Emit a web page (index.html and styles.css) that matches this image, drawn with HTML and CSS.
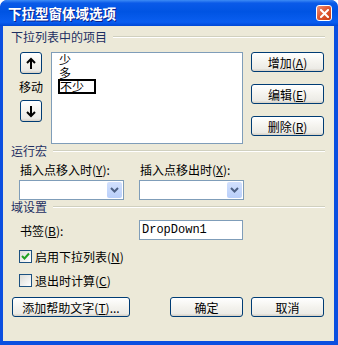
FILE: index.html
```html
<!DOCTYPE html>
<html lang="zh-CN">
<head>
<meta charset="UTF-8" />
<title>下拉型窗体域选项</title>
<link rel="stylesheet" href="styles.css">
</head>
<body>

<div class="window">
  <div class="titlebar">
    <span class="title">下拉型窗体域选项</span>
    <button type="button" class="close" aria-label="关闭">
      <svg width="9" height="9" viewBox="0 0 9 9"><path d="M1 1 L8 8 M8 1 L1 8" stroke="#fff" stroke-width="2" stroke-linecap="square"/></svg>
    </button>
  </div>

  <div class="dialog">
    <!-- Items in list -->
    <div class="group-title"><span>下拉列表中的项目</span></div>
    <div class="items">
      <div class="move">
        <button type="button" class="btn arrow" aria-label="上移">
          <svg width="10" height="13" viewBox="0 0 10 13"><path d="M5 12 V2 M1 6 L5 2 L9 6" fill="none" stroke="#000" stroke-width="2"/></svg>
        </button>
        <span class="move-label">移动</span>
        <button type="button" class="btn arrow" aria-label="下移">
          <svg width="10" height="13" viewBox="0 0 10 13"><path d="M5 1 V11 M1 7 L5 11 L9 7" fill="none" stroke="#000" stroke-width="2"/></svg>
        </button>
      </div>
      <div class="listbox">
        <div class="item">少</div>
        <div class="item">多</div>
        <div class="item focus">不少</div>
      </div>
      <div class="side-buttons">
        <button type="button" class="btn">增加(<u>A</u>)</button>
        <button type="button" class="btn">编辑(<u>E</u>)</button>
        <button type="button" class="btn">删除(<u>R</u>)</button>
      </div>
    </div>

    <!-- Macros -->
    <div class="group-title"><span>运行宏</span></div>
    <div class="macro">
      <div class="field">
        <label>插入点移入时(<u>Y</u>):</label>
        <div class="combo"><span class="drop"><svg width="9" height="6" viewBox="0 0 9 6"><path d="M1 1 L4.5 4.5 L8 1" fill="none" stroke="#4d6185" stroke-width="2"/></svg></span></div>
      </div>
      <div class="field">
        <label>插入点移出时(<u>X</u>):</label>
        <div class="combo"><span class="drop"><svg width="9" height="6" viewBox="0 0 9 6"><path d="M1 1 L4.5 4.5 L8 1" fill="none" stroke="#4d6185" stroke-width="2"/></svg></span></div>
      </div>
    </div>

    <!-- Field settings -->
    <div class="group-title"><span>域设置</span></div>
    <div class="bookmark">
      <label>书签(<u>B</u>):</label>
      <div class="textbox">DropDown1</div>
    </div>
    <label class="check"><span class="box checked"><svg width="9" height="9" viewBox="0 0 9 9"><path d="M1 4 L3.5 6.5 L8 1.5" fill="none" stroke="#21a121" stroke-width="2"/></svg></span>启用下拉列表(<u>N</u>)</label>
    <label class="check"><span class="box"></span>退出时计算(<u>C</u>)</label>

    <div class="footer">
      <button type="button" class="btn help">添加帮助文字(<u>T</u>)...</button>
      <button type="button" class="btn">确定</button>
      <button type="button" class="btn">取消</button>
    </div>
  </div>
</div>

</body>
</html>
```

FILE: styles.css
```css
body {
  margin: 0;
  background: #fff;
  font-family: "Noto Sans CJK SC", "Liberation Sans", sans-serif;
  font-size: 12px;
  color: #000;
}
.window {
  width: 338px;
  height: 345px;
  box-sizing: border-box;
  background: #0b4fe0;
  border-radius: 7px 7px 0 0;
  padding: 0 4px 4px 3px;
  display: flex;
  flex-direction: column;
  overflow: hidden;
}
.titlebar {
  height: 26px;
  margin: 0 -4px 0 -3px;
  padding: 0 6px 0 8px;
  display: flex;
  align-items: center;
  justify-content: space-between;
  background: linear-gradient(180deg, #3d8bf5 0, #0a5ae8 12%, #0054e3 45%, #0a5ef0 85%, #0048d6 100%);
  border-radius: 7px 7px 0 0;
}
.title {
  color: #fff;
  font-weight: 700;
  font-size: 13.5px;
  line-height: 16px;
  text-shadow: 1px 1px #0a1e8a;
}
.close {
  width: 16px;
  height: 16px;
  padding: 0;
  border: 1px solid #fff;
  border-radius: 3px;
  background: linear-gradient(135deg, #f0907a 0, #e05a34 45%, #c93c12 100%);
  display: flex;
  align-items: center;
  justify-content: center;
}
.dialog {
  flex: 1;
  background: #ece9d8;
  padding: 4px 9px 0 8px;
}
.group-title {
  display: flex;
  align-items: center;
  height: 14px;
  line-height: 14px;
  color: #1d2f62;
}
.group-title::after {
  content: "";
  flex: 1;
  margin-left: 6px;
  border-top: 1px solid #d0d0bf;
  border-bottom: 1px solid #fff;
}
.btn {
  box-sizing: border-box;
  height: 20px;
  padding: 0;
  border: 1px solid #003c74;
  border-radius: 3px;
  background: linear-gradient(180deg, #fff 0, #f4f3ee 50%, #ecebe6 86%, #d6d0c5 100%);
  font-family: inherit;
  font-size: 12px;
  line-height: 17px;
  color: #000;
}
.items {
  display: flex;
  margin-top: 8px;
  padding-left: 9px;
  height: 92px;
}
.move {
  width: 22px;
  display: flex;
  flex-direction: column;
  align-items: center;
}
.btn.arrow {
  width: 22px;
  height: 22px;
  display: flex;
  align-items: center;
  justify-content: center;
}
.move-label {
  height: 26px;
  line-height: 26px;
  width: 26px;
  text-align: center;
}
.listbox {
  width: 192px;
  margin-left: 9px;
  box-sizing: border-box;
  border: 1px solid #7f9db9;
  background: #fff;
  padding: 0 0 0 6px;
}
.item {
  height: 13px;
  line-height: 13px;
  padding-left: 1px;
}
.item.focus {
  width: 38px;
  height: 15px;
  box-sizing: border-box;
  border: 2px solid #000;
  line-height: 11px;
  padding-left: 0;
}
.side-buttons {
  margin-left: 8px;
  display: flex;
  flex-direction: column;
  gap: 12px;
}
.side-buttons .btn {
  width: 73px;
}
.macro {
  display: flex;
  gap: 15px;
  margin-top: 5px;
  padding-left: 8px;
}
.field {
  width: 105px;
}
.field label {
  display: block;
  height: 14px;
  line-height: 14px;
  padding-left: 1px;
}
.combo {
  margin-top: 3px;
  height: 20px;
  box-sizing: border-box;
  border: 1px solid #7f9db9;
  background: #fff;
  display: flex;
  justify-content: flex-end;
  padding: 1px;
}
.drop {
  width: 15px;
  border-radius: 2px;
  background: linear-gradient(180deg, #d2e0fd 0, #b9cffa 100%);
  display: flex;
  align-items: center;
  justify-content: center;
}
.bookmark {
  display: flex;
  align-items: center;
  margin-top: 6px;
  padding-left: 9px;
  height: 20px;
}
.bookmark label {
  width: 119px;
}
.textbox {
  width: 104px;
  height: 20px;
  box-sizing: border-box;
  border: 1px solid #7f9db9;
  background: #fff;
  padding-left: 2px;
  font-family: "Liberation Mono", monospace;
  font-size: 12px;
  line-height: 18px;
}
.check {
  display: flex;
  align-items: center;
  height: 13px;
  line-height: 13px;
  margin-top: 10px;
  padding-left: 8px;
}
.check + .check {
  margin-top: 11px;
}
.box {
  width: 13px;
  height: 13px;
  box-sizing: border-box;
  border: 1px solid #1c5180;
  background: linear-gradient(135deg, #dcdcd7 0, #fff 100%);
  margin-right: 3px;
  display: flex;
  align-items: center;
  justify-content: center;
}
.footer {
  display: flex;
  margin-top: 10px;
  padding-left: 1px;
}
.footer .btn {
  width: 73px;
  margin-left: 8px;
}
.footer .btn.help {
  width: 118px;
  margin-left: 0;
  margin-right: 32px;
}
```
